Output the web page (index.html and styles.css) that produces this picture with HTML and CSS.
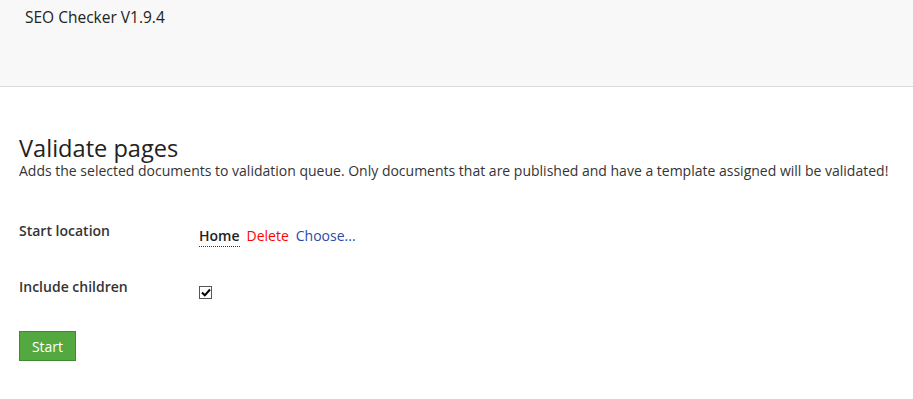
FILE: index.html
```html
<!DOCTYPE html>
<html>
<head>
<meta charset="utf-8">
<link rel="stylesheet" href="styles.css">
</head>
<body>
<div class="header">
  <div class="app-title">SEO Checker V1.9.4</div>
</div>
<div class="content">
  <h1 class="page-title">Validate pages</h1>
  <p class="desc">Adds the selected documents to validation queue. Only documents that are published and have a template assigned will be validated!</p>
  <div class="row row-first">
    <div class="label">Start location</div>
    <div class="value picker">
      <span class="node">Home</span>
      <a class="del">Delete</a>
      <a class="choose">Choose...</a>
    </div>
  </div>
  <div class="row">
    <div class="label">Include children</div>
    <div class="value"><span class="check"><svg width="10" height="9" viewBox="0 0 10 9"><path d="M1 4.5 L3.8 7.3 L9 1.5" fill="none" stroke="#000" stroke-width="2"/></svg></span></div>
  </div>
  <button class="btn">Start</button>
</div>
</body>
</html>
```
FILE: styles.css
```css
* { box-sizing: border-box; }
html, body { margin: 0; padding: 0; background: #fff; }
body { font-family: "Open Sans", sans-serif; color: #343434; font-size: 14px; }
.header {
  height: 87px;
  background: #f8f8f8;
  border-bottom: 1px solid #d9d9d9;
  padding: 7px 25px 0;
}
.app-title { font-size: 15.5px; line-height: 20px; color: #222; }
.content { padding: 48px 19px 0; }
.page-title { margin: 0; font-size: 23.6px; font-weight: 400; line-height: 26px; color: #222; }
.desc { margin: 0; font-size: 14px; line-height: 20px; }
.row { display: flex; align-items: flex-start; }
.row-first { margin-top: 40px; }
.row + .row { margin-top: 30px; }
.label { width: 180px; font-weight: 600; line-height: 20px; color: #343434; }
.value { padding-top: 5px; display: flex; gap: 7px; align-items: flex-start; line-height: 20px; }
.node { color: #222; font-weight: 600; border-bottom: 1px dotted #333; line-height: 20px; height: 21px; display: inline-block; }
.del { color: #f00; }
.choose { color: #2c49a6; }
.check { display: flex; width: 13px; height: 13px; border: 1px solid #555; align-items: center; justify-content: center; margin-top: 4px; }
.btn {
  display: block;
  margin-top: 32px;
  font-family: "Open Sans", sans-serif;
  font-size: 14px;
  color: #fff;
  background: #53a93f;
  border: 1px solid #3d8b2e;
  width: 57px;
  height: 30px;
  padding: 0;
}
```
